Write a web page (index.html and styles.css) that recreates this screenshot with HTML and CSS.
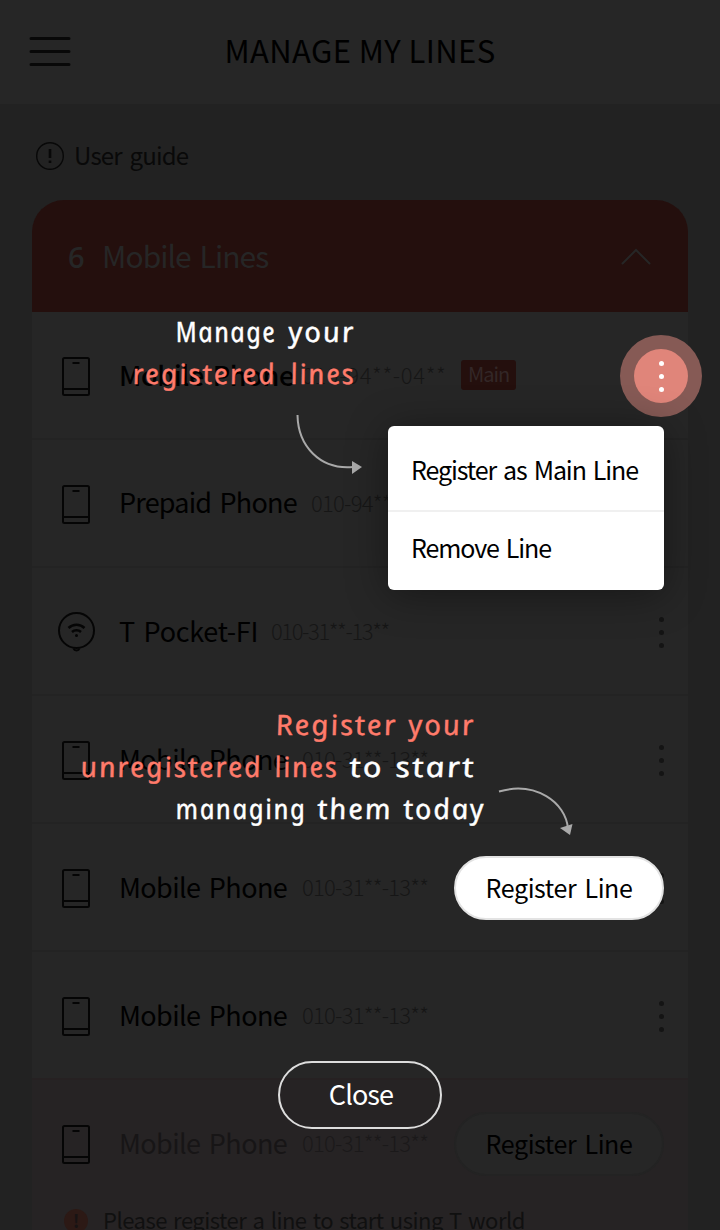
FILE: index.html
```html
<!DOCTYPE html>
<html lang="en">
<head>
<meta charset="utf-8">
<title>Manage my lines</title>
<link rel="stylesheet" href="styles.css">
</head>
<body>
<svg class="defs" width="0" height="0">
  <symbol id="phone" viewBox="0 0 40 40"><rect x="7" y="2" width="26" height="37" rx="1.5"/><path d="M7 33H33M16.5 7H23.5"/></symbol>
  <symbol id="pocket" viewBox="0 0 40 40"><circle cx="20.500" cy="18.500" r="17.500"/><path d="M17.500 36.500C18.500 39 22.500 39 23.500 36.500"/><path stroke-width="2.500" d="M12.500 16C17 11.500 24 11.500 28.500 16M16 20C18.500 17.600 22.500 17.600 25 20"/><circle class="fill" cx="20.500" cy="23.500" r="1.500"/></symbol>
  <symbol id="more" viewBox="0 0 6 32"><circle cx="3.500" cy="3.500" r="2.500"/><circle cx="3.500" cy="16.500" r="2.500"/><circle cx="3.500" cy="29.500" r="2.500"/></symbol>
</svg>
<div class="page">
  <header class="topbar">
    <svg class="burger" viewBox="0 0 42 30"><path d="M2 1.500H40M2 14.500H40M2 27.500H40"/></svg>
    <h1 class="title">MANAGE MY LINES</h1>
  </header>
  <main class="content">
    <div class="guide">
      <svg class="guide-icon" viewBox="0 0 28 28"><circle cx="14" cy="14" r="13.300"/><path d="M14 7V16M14 18.500V21"/></svg>
      <span class="guide-text">User guide</span>
    </div>
    <section class="card">
      <div class="card-head">
        <span class="count">6</span><span class="group">Mobile Lines</span>
        <svg class="chevron" viewBox="0 0 30 17"><path d="M1.500 15.500L15 2L28.500 15.500"/></svg>
      </div>
      <div class="row"><svg class="device"><use href="#phone"/></svg><span class="name main-name">Mobile Phone</span><span class="num first">010-94**-04**</span><span class="tag">Main</span></div>
      <div class="row"><svg class="device"><use href="#phone"/></svg><span class="name prepaid">Prepaid Phone</span><span class="num">010-94**-04**</span></div>
      <div class="row"><svg class="device"><use href="#pocket"/></svg><span class="name pocket">T Pocket-FI</span><span class="num tight">010-31**-13**</span><svg class="more"><use href="#more"/></svg></div>
      <div class="row"><svg class="device"><use href="#phone"/></svg><span class="name">Mobile Phone</span><span class="num">010-31**-13**</span><svg class="more"><use href="#more"/></svg></div>
      <div class="row"><svg class="device"><use href="#phone"/></svg><span class="name">Mobile Phone</span><span class="num">010-31**-13**</span><svg class="more"><use href="#more"/></svg></div>
      <div class="row last"><svg class="device"><use href="#phone"/></svg><span class="name">Mobile Phone</span><span class="num">010-31**-13**</span><svg class="more"><use href="#more"/></svg></div>
      <div class="pending">
        <div class="row"><svg class="device"><use href="#phone"/></svg><span class="name">Mobile Phone</span><span class="num">010-31**-13**</span><span class="pill">Register Line</span></div>
        <div class="notice"><span class="alert">!</span><span class="notice-text">Please register a line to start using T world</span></div>
      </div>
    </section>
  </main>

  <svg class="callouts" viewBox="0 0 720 1230">
    <g class="hand">
      <text transform="translate(177 342) skewX(11)" textLength="101" lengthAdjust="spacingAndGlyphs">Manage</text>
      <text transform="translate(290 342) skewX(11)" textLength="67" lengthAdjust="spacingAndGlyphs">your</text>
      <g class="accent">
        <text transform="translate(134 384) skewX(11)" textLength="144" lengthAdjust="spacingAndGlyphs">registered</text>
        <text transform="translate(292 384) skewX(11)" textLength="65" lengthAdjust="spacingAndGlyphs">lines</text>
        <text transform="translate(277 735) skewX(11)" textLength="122" lengthAdjust="spacingAndGlyphs">Register</text>
        <text transform="translate(410 735) skewX(11)" textLength="67" lengthAdjust="spacingAndGlyphs">your</text>
        <text transform="translate(82 777) skewX(11)" textLength="182" lengthAdjust="spacingAndGlyphs">unregistered</text>
        <text transform="translate(276 777) skewX(11)" textLength="64" lengthAdjust="spacingAndGlyphs">lines</text>
      </g>
      <text transform="translate(351 777) skewX(11)" textLength="34" lengthAdjust="spacingAndGlyphs">to</text>
      <text transform="translate(397 777) skewX(11)" textLength="80" lengthAdjust="spacingAndGlyphs">start</text>
      <text transform="translate(177 819) skewX(11)" textLength="131" lengthAdjust="spacingAndGlyphs">managing</text>
      <text transform="translate(319 819) skewX(11)" textLength="75" lengthAdjust="spacingAndGlyphs">them</text>
      <text transform="translate(405 819) skewX(11)" textLength="82" lengthAdjust="spacingAndGlyphs">today</text>
    </g>
    <g class="arrows">
      <path d="M297.500 415C298 446 320 470 353 467"/>
      <path class="tip" d="M352 461L362 467L352 474Z"/>
      <path d="M499 791.500C535 781 566 802 568 829"/>
      <path class="tip" d="M560 828L572.500 824L570 835Z"/>
    </g>
  </svg>
  <div class="spot"><div class="spot-core"><svg class="more-lit"><use href="#more"/></svg></div></div>
  <div class="menu"><div class="item">Register as Main Line</div><div class="item second">Remove Line</div></div>
  <div class="pill lit">Register Line</div>
  <div class="close">Close</div>
</div>
</body>
</html>
```
FILE: styles.css
```css
* { box-sizing: border-box; }
body { margin: 0; background: #222; font-family: "Noto Sans CJK KR", "Noto Sans", sans-serif; }
.defs { position: absolute; }
.page { position: relative; width: 720px; height: 1230px; overflow: hidden; background: #222; color: #000; line-height: 1; white-space: nowrap; }
.topbar { height: 104px; background: #262626; display: grid; grid-template-columns: 100px 1fr 100px; align-items: center; }
.burger { width: 42px; height: 30px; margin-left: 29px; fill: none; stroke: #080808; stroke-width: 3; stroke-linecap: round; }
.title { margin: 0; padding-bottom: 6px; text-align: center; font-size: 31px; font-weight: 400; letter-spacing: .4px; }
.content { padding: 37px 32px 0; }
.guide { height: 30px; display: flex; align-items: center; padding-left: 4px; gap: 10px; margin-bottom: 29px; }
.guide-icon { width: 28px; height: 28px; fill: none; stroke: #080808; stroke-width: 1.4; }
.guide-icon path { stroke-width: 2.6; }
.guide-text { font-size: 24px; color: #090909; letter-spacing: -.8px; word-spacing: 3px; padding-bottom: 2px; }
.card { background: #262626; border-radius: 32px 32px 0 0; }
.card-head { height: 112px; padding: 0 37px 0 36px; background: #240f0d; border-radius: 32px 32px 0 0; display: flex; align-items: center; color: #262626; }
.count { width: 34px; font: 600 29px/1 "Open Sans", sans-serif; }
.group { font-size: 30px; letter-spacing: -.95px; word-spacing: 3px; padding-bottom: 2px; }
.chevron { width: 30px; height: 17px; margin-left: auto; fill: none; stroke: #262626; stroke-width: 2; stroke-linecap: round; }
.row { height: 128px; display: flex; align-items: center; padding: 0 24px; box-shadow: inset 0 -2px #232323; }
.device { flex: none; width: 40px; height: 40px; margin-right: 23px; fill: none; stroke: #050505; stroke-width: 2; }
.fill { fill: #050505; stroke: none; }
.name { flex: none; font-size: 27px; width: 183px; letter-spacing: -.6px; word-spacing: 3px; padding-bottom: 4px; }
.main-name { font-weight: 500; letter-spacing: -.35px; }
.prepaid { width: 192px; letter-spacing: -.8px; padding-bottom: 6px; }
.pocket { width: 152px; letter-spacing: -.3px; }
.num { flex: none; width: 130px; font-size: 22px; font-weight: 300; color: #161616; letter-spacing: -.75px; padding-bottom: 4px; }
.tight { letter-spacing: -1.4px; }
.first { width: 149px; letter-spacing: .65px; }
.tag { margin: 0 0 2px 10px; width: 55px; height: 30px; border-radius: 3px; background: #240f0d; color: #332727; font-size: 20px; letter-spacing: -1px; line-height: 28px; text-align: center; }
.more { width: 6px; height: 32px; margin-left: auto; fill: #141414; }
.last { box-shadow: inset 0 -2px #262122; }
.pending { background: #262324; height: 180px; }
.pending .row { box-shadow: none; }
.pending .name { color: #171516; }
.pending .num { color: #1b191a; }
.pill { flex: none; width: 210px; height: 64px; border: 2px solid #232323; border-radius: 32px; background: #262626; font-size: 25px; letter-spacing: -.4px; word-spacing: 3px; line-height: 58px; text-align: center; margin-left: auto; }
.notice { display: flex; align-items: center; gap: 15px; padding-left: 32px; }
.alert { width: 24px; height: 24px; border-radius: 12px; background: #2c1915; color: #171314; font-size: 18px; font-weight: 700; line-height: 22px; text-align: center; }
.notice-text { font-size: 22px; color: #101010; letter-spacing: -.5px; word-spacing: 1.8px; padding-bottom: 3px; }
.callouts { position: absolute; inset: 0; width: 720px; height: 1230px; }
.hand { font: italic 400 28px "Noto Sans", sans-serif; letter-spacing: 1.8px; fill: #fff; stroke: #fff; stroke-width: .4px; }
.accent { fill: #ff7b6b; stroke: #ff7b6b; }
.arrows { fill: none; stroke: #a9a9a9; stroke-width: 2; }
.tip { fill: #a9a9a9; stroke: none; }
.spot { position: absolute; left: 620px; top: 335px; width: 82px; height: 82px; border-radius: 50%; background: #865a55; display: grid; place-items: center; }
.spot-core { width: 54px; height: 54px; border-radius: 50%; background: #e0857a; display: grid; place-items: center; }
.more-lit { width: 6px; height: 32px; fill: #fff; }
.menu { position: absolute; left: 388px; top: 426px; width: 276px; height: 164px; border-radius: 6px; background: #fff; box-shadow: 0 4px 40px rgba(0,0,0,.4); padding: 0 23px; }
.item { height: 84px; line-height: 86px; font-size: 25px; letter-spacing: -1.1px; word-spacing: 2.5px; }
.second { margin: 0 -23px; padding: 0 23px; height: 80px; line-height: 70px; letter-spacing: -1.1px; border-top: 2px solid #f0f0f0; }
.lit { position: absolute; left: 454px; top: 856px; background: #fff; border-color: #e3e3e3; }
.close { position: absolute; left: 278px; top: 1061px; width: 164px; height: 68px; border: 2px solid #ddd; border-radius: 34px; color: #fff; font-size: 27px; letter-spacing: -.9px; line-height: 62px; text-align: center; padding-left: 2px; }
```
